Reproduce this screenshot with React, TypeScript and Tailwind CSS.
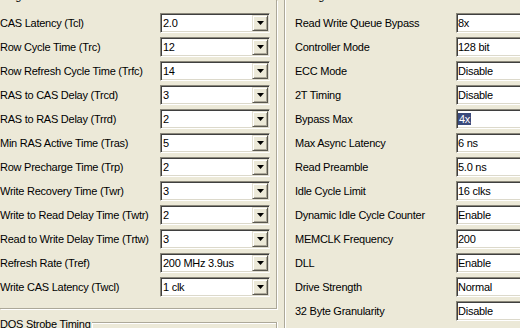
import React from 'react';

const leftRows: [string, string][] = [
  ['CAS Latency (Tcl)', '2.0'],
  ['Row Cycle Time (Trc)', '12'],
  ['Row Refresh Cycle Time (Trfc)', '14'],
  ['RAS to CAS Delay (Trcd)', '3'],
  ['RAS to RAS Delay (Trrd)', '2'],
  ['Min RAS Active Time (Tras)', '5'],
  ['Row Precharge Time (Trp)', '2'],
  ['Write Recovery Time (Twr)', '3'],
  ['Write to Read Delay Time (Twtr)', '2'],
  ['Read to Write Delay Time (Trtw)', '3'],
  ['Refresh Rate (Tref)', '200 MHz 3.9us'],
  ['Write CAS Latency (Twcl)', '1 clk'],
];

const rightRows: [string, string][] = [
  ['Read Write Queue Bypass', '8x'],
  ['Controller Mode', '128 bit'],
  ['ECC Mode', 'Disable'],
  ['2T Timing', 'Disable'],
  ['Bypass Max', '4x'],
  ['Max Async Latency', '6 ns'],
  ['Read Preamble', '5.0 ns'],
  ['Idle Cycle Limit', '16 clks'],
  ['Dynamic Idle Cycle Counter', 'Enable'],
  ['MEMCLK Frequency', '200'],
  ['DLL', 'Enable'],
  ['Drive Strength', 'Normal'],
  ['32 Byte Granularity', 'Disable'],
];

const sunken =
  'border border-t-[#8a877a] border-l-[#8a877a] border-b-white border-r-[#f4f3ee] shadow-[inset_1px_1px_0_#3f3f3f,inset_-1px_-1px_0_#dcd9cb] bg-white';

const Combo = ({ value }: { value: string }) => (
  <div className={`h-[20px] w-[110px] flex items-center ${sunken}`}>
    <span className="flex-1 pl-[2px] leading-[14px] whitespace-nowrap">{value}</span>
    <div className="mr-[1px] h-[16px] w-[16px] flex items-center justify-center bg-[#ece9d8] border border-t-[#e3e0d2] border-l-[#e3e0d2] border-b-[#5a5850] border-r-[#5a5850] shadow-[inset_1px_1px_0_#fff,inset_-1px_-1px_0_#aca899]">
      <svg width="7" height="4" viewBox="0 0 7 4">
        <path d="M0 0h7L3.5 4z" fill="#000" />
      </svg>
    </div>
  </div>
);

const Field = ({ value, selected }: { value: string; selected?: boolean }) => (
  <div className={`h-[20px] w-[120px] flex items-center ${sunken}`}>
    <span className="pl-[1px] leading-[14px] whitespace-nowrap">
      {selected ? <span className="bg-[#3a4a7c] text-white px-[1px]">{value}</span> : value}
    </span>
  </div>
);

export default function App() {
  return (
    <div
      className="w-[520px] h-[328px] overflow-hidden bg-[#ece9d8] text-black text-[11px] tracking-[-0.25px] flex"
      style={{ fontFamily: '"Liberation Sans", Arial, sans-serif' }}
    >
      {/* Left column: timing group + DQS group */}
      <div className="w-[277px] flex flex-col shrink-0">
        <div className="border-r border-b border-[#aca899] shadow-[1px_1px_0_#fff] pb-[9px]">
          <div className="-mt-[11px] h-[14px] leading-[14px] -ml-[10px]">Timing</div>
          <div className="mt-[8px]">
            {leftRows.map(([label, value]) => (
              <div key={label} className="h-[24px] grid grid-cols-[160px_110px] items-center">
                <span className="whitespace-nowrap">{label}</span>
                <Combo value={value} />
              </div>
            ))}
          </div>
        </div>
        <div className="flex flex-1 mt-[1px]">
          <span className="mt-[7px] leading-[14px] whitespace-nowrap pr-[1px]">DQS Strobe Timing</span>
          <div className="flex-1 mt-[12px] border-t border-r border-[#aca899] shadow-[inset_1px_1px_0_#fff,1px_0_0_#fff]" />
        </div>
      </div>

      {/* Right column */}
      <div className="ml-[7px] flex-1 border-l border-[#aca899] shadow-[inset_1px_0_0_#fff] pl-[10px]">
        <div className="-mt-[11px] h-[14px] leading-[14px] -ml-[2px]">Timing</div>
        <div className="mt-[8px]">
          {rightRows.map(([label, value]) => (
            <div key={label} className="h-[24px] grid grid-cols-[161px_120px] items-center">
              <span className="whitespace-nowrap">{label}</span>
              <Field value={value} selected={label === 'Bypass Max'} />
            </div>
          ))}
        </div>
      </div>
    </div>
  );
}
